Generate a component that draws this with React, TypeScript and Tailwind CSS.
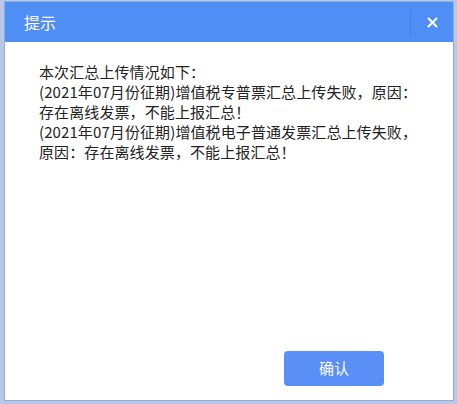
import React from 'react';

const lines = [
  '本次汇总上传情况如下：',
  '(2021年07月份征期)增值税专普票汇总上传失败，原因：',
  '存在离线发票，不能上报汇总！',
  '(2021年07月份征期)增值税电子普通发票汇总上传失败，',
  '原因：存在离线发票，不能上报汇总！',
];

export default function App() {
  return (
    <div
      className="w-[457px] h-[404px] bg-[#b9c8e6] pl-[4px] pr-[3px] pb-[3px] pt-[1px] flex"
      style={{ fontFamily: '"Microsoft YaHei", "Noto Sans CJK SC", sans-serif' }}
    >
      <div className="flex-1 flex flex-col bg-white border border-[#8fabe0]">
        {/* header */}
        <div className="h-[40px] bg-[#4f8ef5] flex items-center text-white">
          <span className="pl-[19px] text-[16px] leading-none">提示</span>
          <div className="ml-auto flex items-center h-full">
            <div className="w-px h-[25px] bg-[#417fe6]" />
            <button className="w-[42px] h-full flex items-center justify-center">
              <svg width="11" height="11" viewBox="0 0 11 11">
                <path d="M1.5 1.5 L9.5 9.5 M9.5 1.5 L1.5 9.5" stroke="white" strokeWidth="2" strokeLinecap="round" />
              </svg>
            </button>
          </div>
        </div>

        {/* body */}
        <div className="pt-[20px] pl-[34px] text-[15px] leading-[20px] tracking-[0.1px] text-[#222]">
          {lines.map((l, i) => (
            <div key={i} className="whitespace-nowrap">{l}</div>
          ))}
        </div>

        {/* footer */}
        <div className="mt-auto flex justify-end pr-[69px] pb-[14px]">
          <button className="w-[100px] h-[35px] rounded-[4px] bg-[#5b8ff8] text-white text-[15px]">
            确认
          </button>
        </div>
      </div>
    </div>
  );
}
